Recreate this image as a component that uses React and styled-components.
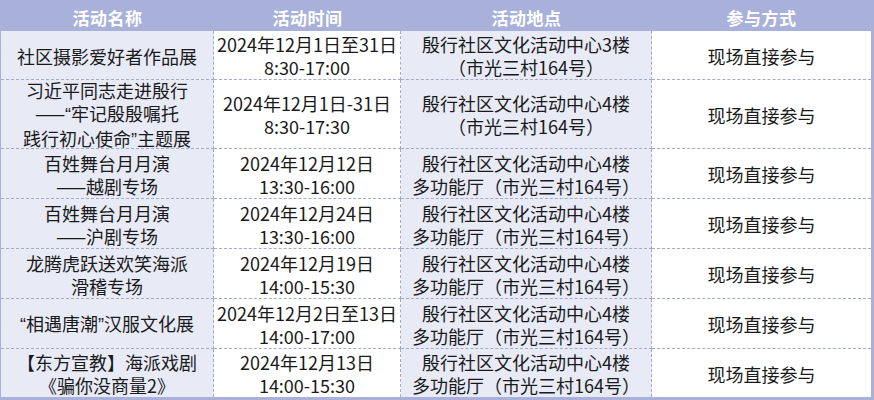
import React from "react";
import styled, { createGlobalStyle } from "styled-components";

const Global = createGlobalStyle`
  html, body { margin: 0; padding: 0; background: #ffffff; }
  body {
    font-family: "Noto Sans CJK SC", sans-serif;
    color: #1a1a1a;
  }
`;

const HEAD = "#a9b1db";

const Table = styled.div`
  box-sizing: border-box;
  width: 874px;
  height: 400px;
  border-left: 1px solid ${HEAD};
  border-right: 3px solid ${HEAD};
  border-bottom: 3px solid ${HEAD};
  display: grid;
  grid-template-columns: 213px 187px 251px 219px;
  grid-template-rows: 31px 49px 69px 50px 50px 50px 50px 48px;
`;

const HeadCell = styled.div`
  background: ${HEAD};
  color: #ffffff;
  font-family: "Noto Sans CJK SC", sans-serif;
  font-weight: 700;
  font-size: 17px;
  display: flex;
  align-items: center;
  justify-content: center;
  padding-top: 3px;
  box-sizing: border-box;
  letter-spacing: 0.5px;
`;

const Cell = styled.div`
  box-sizing: border-box;
  background: ${(p) => (p.$shade ? "#e8eaf6" : "#ffffff")};
  border-right: ${(p) => (p.$lastCol ? "none" : "1px dashed #a4a9d0")};
  border-bottom: ${(p) => (p.$lastRow ? "none" : "1px dashed #a4a9d0")};
  display: flex;
  align-items: center;
  justify-content: center;
  text-align: center;
  font-size: 18px;
  line-height: 23px;
  padding-top: 2px;
  white-space: nowrap;
`;

const Lines = styled.div`
  display: flex;
  flex-direction: column;
  align-items: center;
`;

const Line = styled.span`
  display: block;
`;

const Quote = styled.span`
  font-family: "Liberation Sans", sans-serif;
`;

const withQuotes = (text) =>
  text.split(/([“”])/).map((part, i) =>
    part === "“" || part === "”" ? <Quote key={i}>{part}</Quote> : part
  );

const headers = ["活动名称", "活动时间", "活动地点", "参与方式"];

const rows = [
  [
    ["社区摄影爱好者作品展"],
    ["2024年12月1日至31日", "8:30-17:00"],
    ["殷行社区文化活动中心3楼", "（市光三村164号）"],
    ["现场直接参与"],
  ],
  [
    ["习近平同志走进殷行", "——“牢记殷殷嘱托", "践行初心使命”主题展"],
    ["2024年12月1日-31日", "8:30-17:30"],
    ["殷行社区文化活动中心4楼", "（市光三村164号）"],
    ["现场直接参与"],
  ],
  [
    ["百姓舞台月月演", "——越剧专场"],
    ["2024年12月12日", "13:30-16:00"],
    ["殷行社区文化活动中心4楼", "多功能厅（市光三村164号）"],
    ["现场直接参与"],
  ],
  [
    ["百姓舞台月月演", "——沪剧专场"],
    ["2024年12月24日", "13:30-16:00"],
    ["殷行社区文化活动中心4楼", "多功能厅（市光三村164号）"],
    ["现场直接参与"],
  ],
  [
    ["龙腾虎跃送欢笑海派", "滑稽专场"],
    ["2024年12月19日", "14:00-15:30"],
    ["殷行社区文化活动中心4楼", "多功能厅（市光三村164号）"],
    ["现场直接参与"],
  ],
  [
    ["“相遇唐潮”汉服文化展"],
    ["2024年12月2日至13日", "14:00-17:00"],
    ["殷行社区文化活动中心4楼", "多功能厅（市光三村164号）"],
    ["现场直接参与"],
  ],
  [
    ["【东方宣教】海派戏剧", "《骗你没商量2》"],
    ["2024年12月13日", "14:00-15:30"],
    ["殷行社区文化活动中心4楼", "多功能厅（市光三村164号）"],
    ["现场直接参与"],
  ],
];

export default function App() {
  return (
    <>
      <Global />
      <Table>
        {headers.map((h) => (
          <HeadCell key={h}>{h}</HeadCell>
        ))}
        {rows.map((row, ri) =>
          row.map((cell, ci) => (
            <Cell
              key={`${ri}-${ci}`}
              $shade={ci % 2 === 0}
              $lastCol={ci === 3}
              $lastRow={ri === rows.length - 1}
            >
              <Lines>
                {cell.map((line, li) => (
                  <Line key={li}>{withQuotes(line)}</Line>
                ))}
              </Lines>
            </Cell>
          ))
        )}
      </Table>
    </>
  );
}
